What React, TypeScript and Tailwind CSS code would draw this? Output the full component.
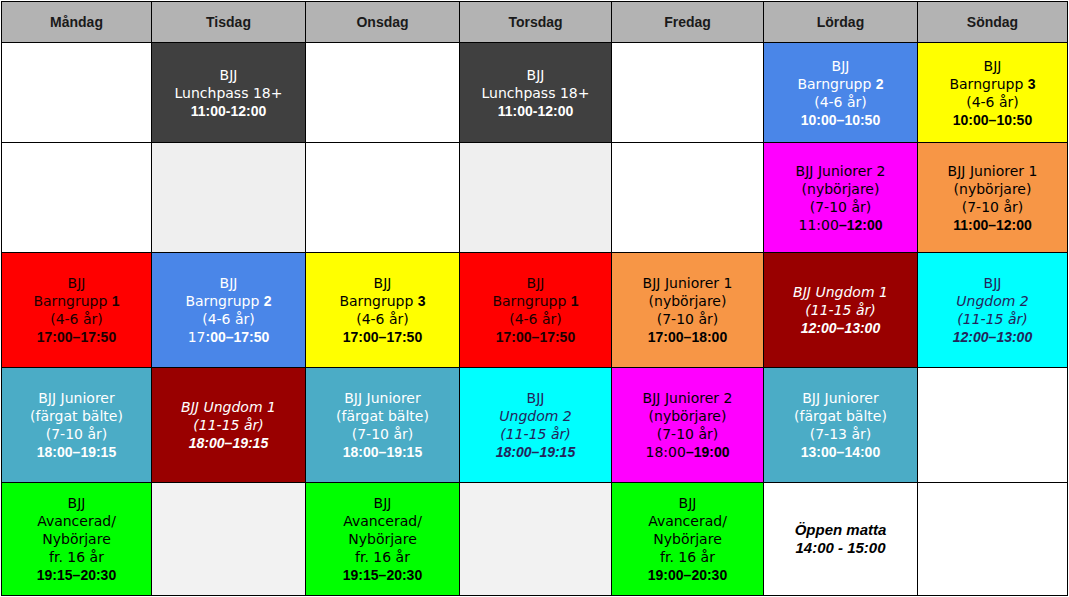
import React from 'react';

const days = ['Måndag', 'Tisdag', 'Onsdag', 'Torsdag', 'Fredag', 'Lördag', 'Söndag'];

// bold bits use Liberation Sans, the regular text DejaVu Sans (closest to the original's wide sans)
const B = ({ children }: { children: React.ReactNode }) => (
  <span className="font-['Liberation_Sans',sans-serif] font-bold">{children}</span>
);
const I = ({ children }: { children: React.ReactNode }) => <span className="italic">{children}</span>;
const BI = ({ children }: { children: React.ReactNode }) => (
  <span className="font-['Liberation_Sans',sans-serif] font-bold italic">{children}</span>
);

type Cell = { bg: string; text?: string; lines?: React.ReactNode[] };

const empty = (bg = 'bg-white'): Cell => ({ bg });

const lunch: Cell = {
  bg: 'bg-[#404040]',
  text: 'text-white',
  lines: ['BJJ', 'Lunchpass 18+', <B>11:00-12:00</B>],
};

const barn = (n: string, bg: string, text: string, time: React.ReactNode): Cell => ({
  bg,
  text,
  lines: ['BJJ', <>Barngrupp <B>{n}</B></>, '(4-6 år)', time],
});

const jun1 = (time: string): Cell => ({
  bg: 'bg-[#f79646]',
  text: 'text-black',
  lines: ['BJJ Juniorer 1', '(nybörjare)', '(7-10 år)', <B>{time}</B>],
});

const jun2 = (start: string, end: string): Cell => ({
  bg: 'bg-[#ff00ff]',
  text: 'text-black',
  lines: ['BJJ Juniorer 2', '(nybörjare)', '(7-10 år)', <>{start}<B>–{end}</B></>],
});

const farg = (age: string, time: string): Cell => ({
  bg: 'bg-[#4bacc6]',
  text: 'text-white',
  lines: ['BJJ Juniorer', '(färgat bälte)', age, <B>{time}</B>],
});

const ung1 = (time: string): Cell => ({
  bg: 'bg-[#990000]',
  text: 'text-white',
  lines: [<I>BJJ Ungdom 1</I>, <I>(11-15 år)</I>, <BI>{time}</BI>],
});

const ung2 = (time: string): Cell => ({
  bg: 'bg-[#00ffff]',
  text: 'text-[#24245a]',
  lines: ['BJJ', <I>Ungdom 2</I>, <I>(11-15 år)</I>, <BI>{time}</BI>],
});

const avanc = (time: string): Cell => ({
  bg: 'bg-[#00ff00]',
  text: 'text-black',
  lines: ['BJJ', 'Avancerad/', 'Nybörjare', 'fr. 16 år', <B>{time}</B>],
});

const rows: { h: string; cells: Cell[] }[] = [
  {
    h: 'h-[99px]',
    cells: [
      empty(),
      lunch,
      empty(),
      lunch,
      empty(),
      barn('2', 'bg-[#4a86e8]', 'text-white', <B>10:00–10:50</B>),
      barn('3', 'bg-[#ffff00]', 'text-black', <B>10:00–10:50</B>),
    ],
  },
  {
    h: 'h-[109px]',
    cells: [
      empty(),
      empty('bg-[#efefef]'),
      empty(),
      empty('bg-[#efefef]'),
      empty(),
      jun2('11:00', '12:00'),
      jun1('11:00–12:00'),
    ],
  },
  {
    h: 'h-[114px]',
    cells: [
      barn('1', 'bg-[#ff0000]', 'text-[#1a0000]', <B>17:00–17:50</B>),
      barn('2', 'bg-[#4a86e8]', 'text-white', <>17<B>:00–17:50</B></>),
      barn('3', 'bg-[#ffff00]', 'text-black', <B>17:00–17:50</B>),
      barn('1', 'bg-[#ff0000]', 'text-[#1a0000]', <B>17:00–17:50</B>),
      jun1('17:00–18:00'),
      ung1('12:00–13:00'),
      ung2('12:00–13:00'),
    ],
  },
  {
    h: 'h-[114px]',
    cells: [
      farg('(7-10 år)', '18:00–19:15'),
      ung1('18:00–19:15'),
      farg('(7-10 år)', '18:00–19:15'),
      ung2('18:00–19:15'),
      jun2('18:00', '19:00'),
      farg('(7-13 år)', '13:00–14:00'),
      empty(),
    ],
  },
  {
    h: 'h-[112px]',
    cells: [
      avanc('19:15–20:30'),
      empty('bg-[#f2f2f2]'),
      avanc('19:15–20:30'),
      empty('bg-[#f2f2f2]'),
      avanc('19:00–20:30'),
      {
        bg: 'bg-white',
        text: 'text-black text-[15px]',
        lines: [<BI>Öppen matta</BI>, <BI>14:00 - 15:00</BI>],
      },
      empty(),
    ],
  },
];

export default function App() {
  return (
    <div className="w-[1069px] h-[597px] bg-white pt-px pl-px">
      <div className="inline-grid grid-cols-[149px_153px_153px_151px_151px_153px_149px] gap-px bg-black p-px font-['DejaVu_Sans',sans-serif] text-[14px] leading-[18px]">
        {days.map((d) => (
          <div
            key={d}
            className="h-[40px] bg-[#b3b3b3] flex items-center justify-center font-['Liberation_Sans',sans-serif] font-bold text-[#1a1a1a]"
          >
            {d}
          </div>
        ))}
        {rows.map((r, ri) =>
          r.cells.map((c, ci) => (
            <div
              key={`${ri}-${ci}`}
              className={`${r.h} ${c.bg} ${c.text ?? ''} flex flex-col items-center justify-center text-center`}
            >
              {c.lines?.map((l, li) => (
                <div key={li} className="whitespace-nowrap">
                  {l}
                </div>
              ))}
            </div>
          ))
        )}
      </div>
    </div>
  );
}
